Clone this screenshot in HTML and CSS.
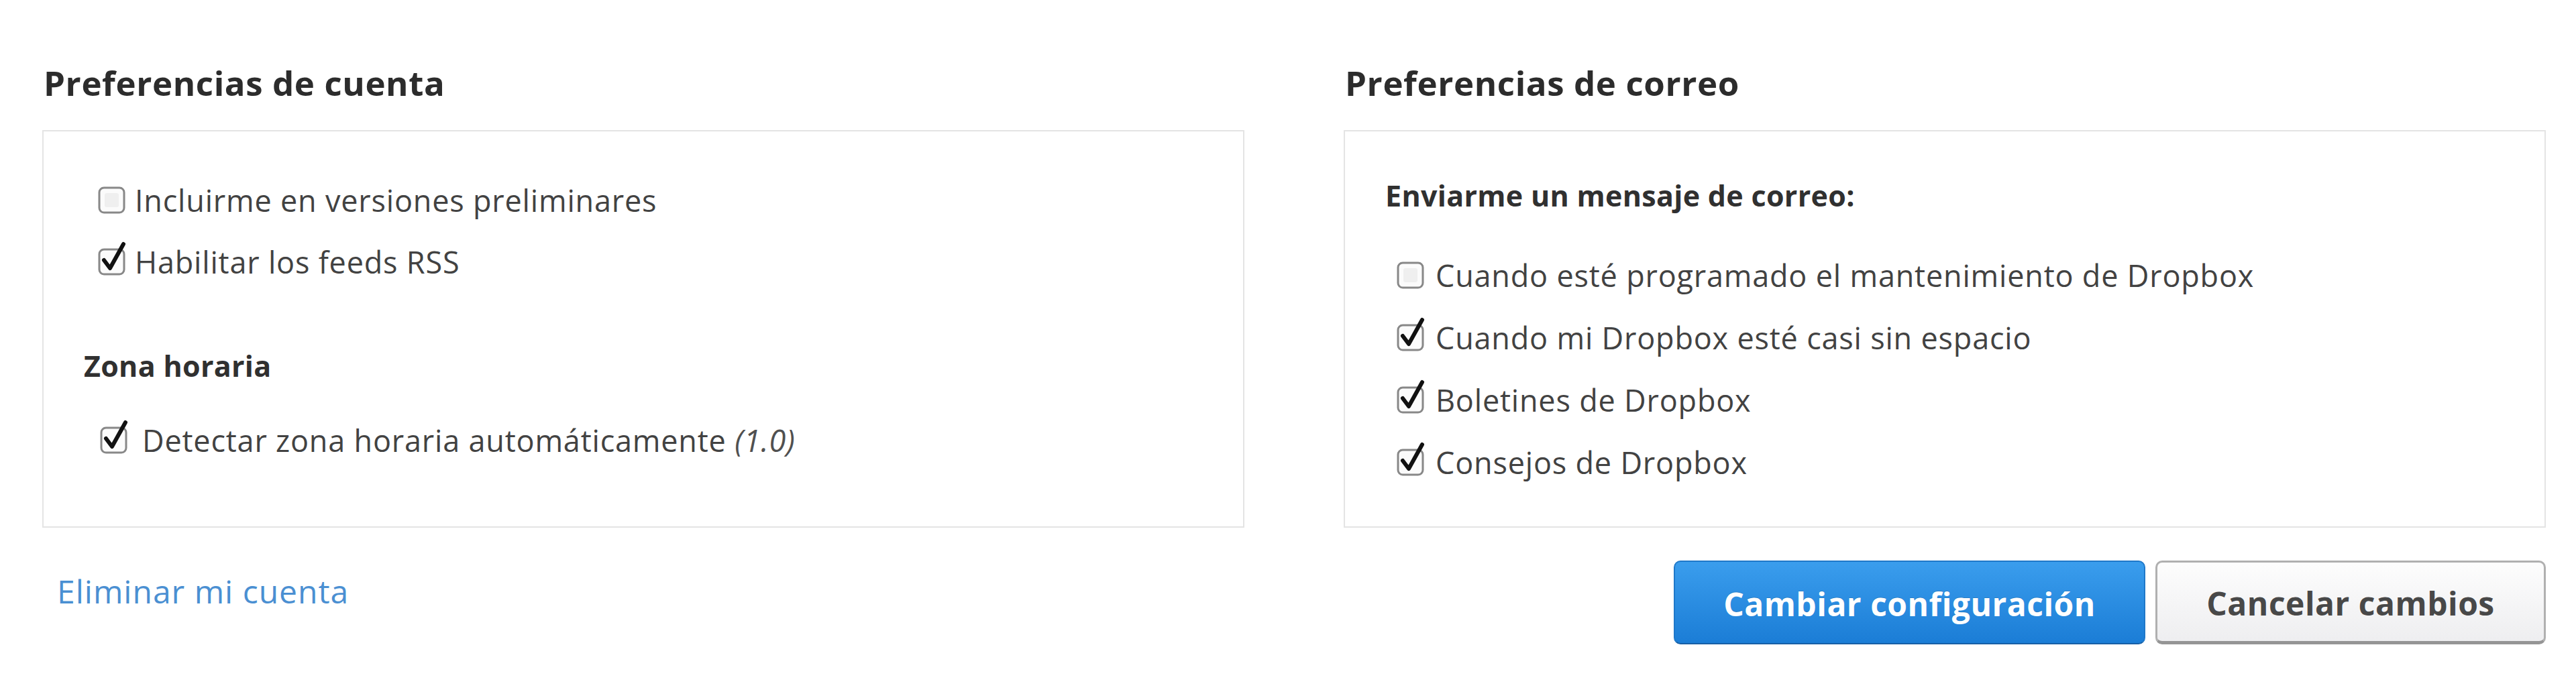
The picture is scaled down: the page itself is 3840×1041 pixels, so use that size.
FILE: index.html
```html
<!DOCTYPE html>
<html lang="es">
<head>
<meta charset="utf-8">
<title>Preferencias</title>
<link rel="stylesheet" href="styles.css">
</head>
<body>
<div class="page">
  <div class="cols">
    <section class="col">
      <h2 class="heading">Preferencias de cuenta</h2>
      <div class="box box-left">
        <div class="opts">
          <label class="opt"><span class="cb"><svg viewBox="0 0 46 54" width="46" height="54"><rect x="3" y="12" width="37" height="37" rx="7" class="cb-box"/><rect x="11" y="20" width="21" height="21" rx="3" class="cb-inner"/></svg></span><span>Incluirme en versiones preliminares</span></label>
          <label class="opt"><span class="cb"><svg viewBox="0 0 46 54" width="46" height="54"><rect x="3" y="12" width="37" height="37" rx="7" class="cb-box"/><path d="M10 28 L19 40 L39 4" class="cb-check"/></svg></span><span>Habilitar los feeds RSS</span></label>
        </div>
        <h3 class="sub sub-tz">Zona horaria</h3>
        <div class="opts opts-tz">
          <label class="opt opt-spaced"><span class="cb"><svg viewBox="0 0 46 54" width="46" height="54"><rect x="3" y="12" width="37" height="37" rx="7" class="cb-box"/><path d="M10 28 L19 40 L39 4" class="cb-check"/></svg></span><span>Detectar zona horaria automáticamente <em>(1.0)</em></span></label>
        </div>
      </div>
    </section>
    <section class="col">
      <h2 class="heading">Preferencias de correo</h2>
      <div class="box box-right">
        <h3 class="sub sub-mail">Enviarme un mensaje de correo:</h3>
        <div class="opts opts-mail">
          <label class="opt opt-mail"><span class="cb"><svg viewBox="0 0 46 54" width="46" height="54"><rect x="3" y="12" width="37" height="37" rx="7" class="cb-box"/><rect x="11" y="20" width="21" height="21" rx="3" class="cb-inner"/></svg></span><span>Cuando esté programado el mantenimiento de Dropbox</span></label>
          <label class="opt opt-mail"><span class="cb"><svg viewBox="0 0 46 54" width="46" height="54"><rect x="3" y="12" width="37" height="37" rx="7" class="cb-box"/><path d="M10 28 L19 40 L39 4" class="cb-check"/></svg></span><span>Cuando mi Dropbox esté casi sin espacio</span></label>
          <label class="opt opt-mail"><span class="cb"><svg viewBox="0 0 46 54" width="46" height="54"><rect x="3" y="12" width="37" height="37" rx="7" class="cb-box"/><path d="M10 28 L19 40 L39 4" class="cb-check"/></svg></span><span>Boletines de Dropbox</span></label>
          <label class="opt opt-mail"><span class="cb"><svg viewBox="0 0 46 54" width="46" height="54"><rect x="3" y="12" width="37" height="37" rx="7" class="cb-box"/><path d="M10 28 L19 40 L39 4" class="cb-check"/></svg></span><span>Consejos de Dropbox</span></label>
        </div>
      </div>
    </section>
  </div>
  <div class="cols footer">
    <div class="foot-left"><a class="link" href="#">Eliminar mi cuenta</a></div>
    <div class="foot-right">
      <button class="btn btn-primary" type="button">Cambiar configuración</button>
      <button class="btn btn-default" type="button">Cancelar cambios</button>
    </div>
  </div>
</div>
</body>
</html>
```

FILE: styles.css
```css
html, body {
  margin: 0;
  padding: 0;
  background: #ffffff;
}
body {
  font-family: "Open Sans", "DejaVu Sans", sans-serif;
  color: #424242;
  font-size: 45px;
  letter-spacing: 0.8px;
}
.page {
  padding: 93px 0 0 63px;
}
.cols {
  display: grid;
  grid-template-columns: 1792px 1792px;
  column-gap: 148px;
}
.col {
  display: flex;
  flex-direction: column;
}
.heading {
  margin: 0 0 41px 2px;
  font-size: 51px;
  line-height: 60px;
  font-weight: 700;
  color: #2c2c2c;
  letter-spacing: 0.6px;
}
.box {
  flex: 1;
  border: 2px solid #e4e4e4;
  padding-left: 60px;
  box-sizing: border-box;
}
.box-left {
  padding-top: 57px;
  padding-bottom: 82px;
}
.box-right {
  padding-top: 66px;
}
.sub {
  margin: 0;
  font-size: 43px;
  line-height: 60px;
  font-weight: 700;
  color: #303030;
  letter-spacing: 0.3px;
}
.sub-tz {
  margin-top: 79px;
}
.opts {
  display: flex;
  flex-direction: column;
  padding-left: 20px;
}
.opts-tz {
  margin-top: 35px;
  padding-left: 23px;
}
.opts-mail {
  margin-top: 42px;
  padding-left: 16px;
}
.opt {
  display: flex;
  align-items: center;
  height: 92px;
  line-height: 92px;
  gap: 10px;
}
.opt-spaced {
  gap: 18px;
}
.opt-mail {
  height: 93px;
  line-height: 93px;
  gap: 13px;
}
.cb {
  display: flex;
  width: 46px;
  height: 54px;
  margin-top: -8px;
}
.cb svg {
  display: block;
}
.cb-box {
  fill: #fbfbfb;
  stroke: #888888;
  stroke-width: 3;
}
.cb-inner {
  fill: #efefef;
  stroke: none;
}
.cb-check {
  fill: none;
  stroke: #111111;
  stroke-width: 6;
  stroke-linecap: round;
  stroke-linejoin: round;
}
em {
  font-style: italic;
  color: #505050;
}
.footer {
  margin-top: 49px;
}
.foot-left {
  padding: 16px 0 0 22px;
}
.link {
  color: #4a8fd2;
  text-decoration: none;
  font-size: 48px;
  line-height: 60px;
  letter-spacing: 1px;
}
.foot-right {
  display: flex;
  justify-content: flex-end;
  gap: 15px;
}
.btn {
  height: 125px;
  font-family: "Open Sans", "DejaVu Sans", sans-serif;
  font-size: 48px;
  font-weight: 700;
  letter-spacing: 0.5px;
  border-radius: 10px;
  padding: 4px 0 0;
  box-sizing: border-box;
}
.btn-primary {
  width: 703px;
  color: #ffffff;
  background: linear-gradient(#3a9ded, #1b7dd6);
  border: 2px solid #1f78c9;
  border-bottom-color: #175fa5;
  text-shadow: 0 -1px 0 rgba(0, 0, 0, 0.15);
}
.btn-default {
  width: 582px;
  color: #484848;
  background: linear-gradient(#fdfdfd, #eeeef0);
  border: 3px solid #b0b0b0;
  border-bottom: 5px solid #959595;
}
```
